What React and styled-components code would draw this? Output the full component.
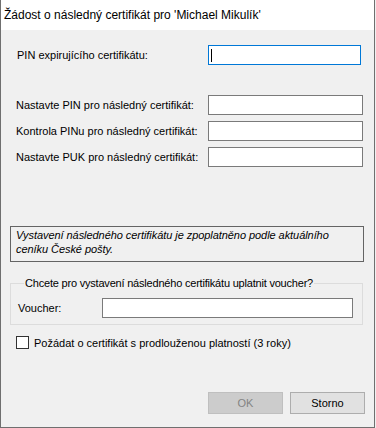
import React from "react";
import styled, { createGlobalStyle } from "styled-components";

const Global = createGlobalStyle`
  html, body { margin: 0; padding: 0; background: #f0f0f0; }
  body { font-family: "Liberation Sans", Arial, sans-serif; }
`;

const Window = styled.div`
  width: 375px;
  height: 428px;
  box-sizing: border-box;
  border: 1px solid #6f6f6f;
  border-top: none;
  display: flex;
  flex-direction: column;
  background: #f0f0f0;
`;

const TitleBar = styled.div`
  height: 30px;
  flex: none;
  background: #ffffff;
  display: flex;
  align-items: center;
  padding-left: 3px;
  font-family: "Liberation Sans", Arial, sans-serif;
  font-size: 12px;
  color: #000;
  white-space: nowrap;
`;

const Client = styled.div`
  flex: 1;
  display: flex;
  flex-direction: column;
  font-size: 11px;
  color: #000;
`;

const FieldRow = styled.div`
  display: flex;
  align-items: center;
  height: 20px;
  margin-top: ${(p) => p.$top}px;
`;

const Label = styled.div`
  width: ${(p) => p.$width}px;
  padding-left: ${(p) => p.$indent}px;
  box-sizing: border-box;
  white-space: nowrap;
  flex: none;
`;

const TextBox = styled.div`
  box-sizing: border-box;
  width: ${(p) => p.$width}px;
  height: 20px;
  background: #fff;
  border: 1px solid ${(p) => (p.$focused ? "#0078d7" : "#7a7a7a")};
  display: flex;
  align-items: center;
  padding-left: 2px;
  flex: none;
`;

const Caret = styled.span`
  width: 1px;
  height: 13px;
  background: #000;
`;

const InfoBox = styled.div`
  margin: 59px 0 0 9px;
  width: 354px;
  height: 36px;
  box-sizing: border-box;
  border: 1px solid #646464;
  padding: 1px 5px 0;
  font-style: italic;
  line-height: 14px;
  letter-spacing: -0.06px;
`;

const Group = styled.fieldset`
  margin: 15px 0 0 9px;
  width: 353px;
  box-sizing: border-box;
  border: 1px solid #dcdcdc;
  padding: 8px 0 6px 7px;
  min-width: 0;
`;

const Legend = styled.legend`
  margin-left: 6px;
  padding: 0 1px;
  line-height: 13px;
  font-size: 11px;
  letter-spacing: -0.2px;
`;

const GroupRow = styled.div`
  display: flex;
  align-items: center;
  height: 20px;
`;

const CheckRow = styled.label`
  display: flex;
  align-items: center;
  margin: 11px 0 0 15px;
  height: 13px;
`;

const Box = styled.span`
  width: 13px;
  height: 13px;
  box-sizing: border-box;
  border: 1px solid #333;
  background: #fff;
  margin-right: 5px;
  flex: none;
`;

const ButtonBar = styled.div`
  display: flex;
  gap: 7px;
  margin: 43px 0 0 207px;
`;

const Button = styled.div`
  width: 75px;
  height: 22px;
  box-sizing: border-box;
  display: flex;
  align-items: center;
  justify-content: center;
  border: 1px solid ${(p) => (p.$disabled ? "#bfbfbf" : "#adadad")};
  background: ${(p) => (p.$disabled ? "#cccccc" : "#e1e1e1")};
  color: ${(p) => (p.$disabled ? "#838383" : "#000")};
  font-size: 11px;
`;

export default function App() {
  return (
    <>
      <Global />
      <Window>
        <TitleBar>Žádost o následný certifikát pro 'Michael Mikulík'</TitleBar>
        <Client>
          <FieldRow $top={15}>
            <Label $width={207} $indent={16}>PIN expirujícího certifikátu:</Label>
            <TextBox $width={153} $focused>
              <Caret />
            </TextBox>
          </FieldRow>
          <FieldRow $top={30}>
            <Label $width={207} $indent={15}>Nastavte PIN pro následný certifikát:</Label>
            <TextBox $width={155} />
          </FieldRow>
          <FieldRow $top={6}>
            <Label $width={207} $indent={15}>Kontrola PINu pro následný certifikát:</Label>
            <TextBox $width={155} />
          </FieldRow>
          <FieldRow $top={6}>
            <Label $width={207} $indent={15}>Nastavte PUK pro následný certifikát:</Label>
            <TextBox $width={155} />
          </FieldRow>
          <InfoBox>
            Vystavení následného certifikátu je zpoplatněno podle aktuálního
            <br />
            ceníku České pošty.
          </InfoBox>
          <Group>
            <Legend>Chcete pro vystavení následného certifikátu uplatnit voucher?</Legend>
            <GroupRow>
              <Label $width={84} $indent={0}>Voucher:</Label>
              <TextBox $width={251} />
            </GroupRow>
          </Group>
          <CheckRow>
            <Box />
            Požádat o certifikát s prodlouženou platností (3 roky)
          </CheckRow>
          <ButtonBar>
            <Button $disabled>OK</Button>
            <Button>Storno</Button>
          </ButtonBar>
        </Client>
      </Window>
    </>
  );
}
